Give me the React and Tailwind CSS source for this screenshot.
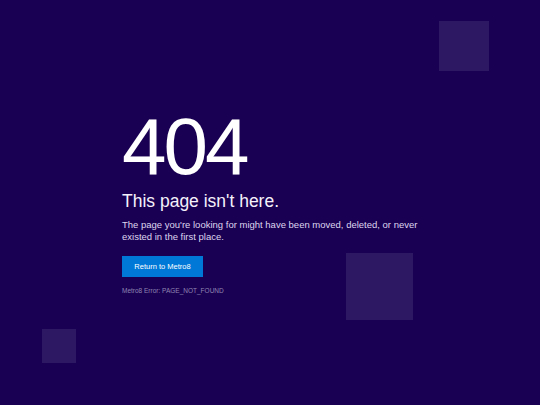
export default function App() {
  return (
    <div
      className="relative w-[540px] h-[405px] overflow-hidden bg-[#1a0052] text-white"
      style={{ fontFamily: '"Liberation Sans", Arial, sans-serif' }}
    >
      {/* decorative tiles */}
      <div className="absolute left-[439px] top-[21px] w-[50px] h-[50px] bg-[#2c1863]" />
      <div className="absolute left-[346px] top-[253px] w-[67px] h-[67px] bg-[#2c1863]" />
      <div className="absolute left-[42px] top-[329px] w-[34px] h-[34px] bg-[#2c1863]" />

      <main className="relative flex flex-col items-start pl-[122px] pt-[111px]">
        <h1 className="text-[80px] leading-[72px] tracking-[-3px] font-normal">404</h1>
        <h2 className="mt-[8px] text-[17.5px] leading-[20px] text-[#f4f1fb]">This page isn't here.</h2>
        <p className="mt-[8px] w-[300px] text-[9.5px] leading-[11.5px] text-[#ddd6f0]">
          The page you're looking for might have been moved, deleted, or never existed in the first place.
        </p>
        <button className="mt-[14px] w-[81px] h-[21px] bg-[#0078d7] text-[7.5px] text-white">
          Return to Metro8
        </button>
        <div className="mt-[10px] text-[6.5px] leading-[8px] text-[#8f86b3]">Metro8 Error: PAGE_NOT_FOUND</div>
      </main>
    </div>
  );
}
